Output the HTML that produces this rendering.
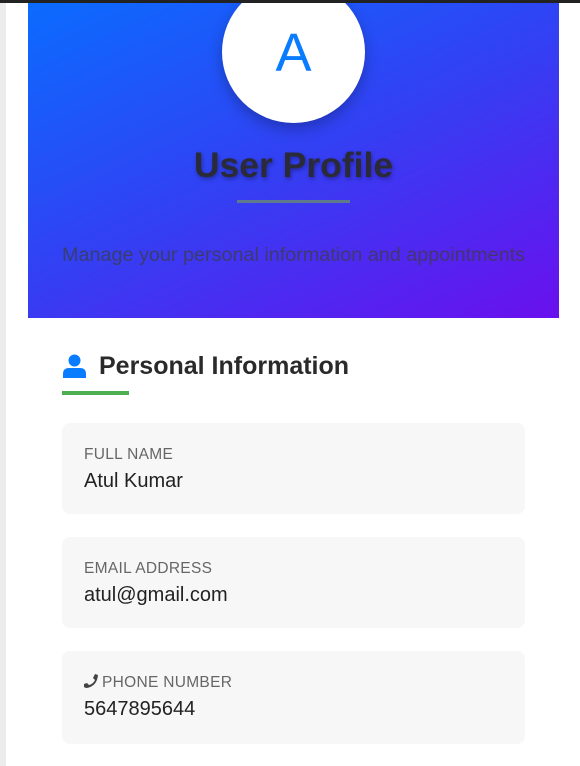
<!DOCTYPE html>
<html><head><meta charset="utf-8"><style>
*{box-sizing:border-box;margin:0;padding:0}
body{width:580px;height:766px;overflow:hidden;background:#fff;font-family:"Liberation Sans",Arial,sans-serif;position:relative}
.strip{position:absolute;left:0;top:0;width:6px;height:766px;background:#ececec}
.topbar{position:absolute;left:0;top:0;width:580px;height:3px;background:#222}
.hdr{position:absolute;left:28px;top:0;width:531px;height:318px;background:linear-gradient(155deg,#0a6cff 0%,#3340f3 50%,#6a10ee 100%);overflow:hidden}
.av{position:absolute;left:194px;top:-19px;width:143px;height:142px;border-radius:50%;background:#fff;box-shadow:0 6px 14px rgba(0,0,0,.25);text-align:center;font-size:54px;color:#0a7cff;padding-top:12px;line-height:120px}
.t{position:absolute;left:0;width:531px;top:145px;text-align:center;font-size:35.5px;font-weight:bold;color:#2a2a38;text-shadow:1px 2px 4px rgba(0,0,0,.35)}
.ln{position:absolute;left:209px;top:200px;width:113px;height:3px;background:#5e7a8c}
.s{position:absolute;left:0;width:531px;top:244px;text-align:center;font-size:19.8px;color:rgba(60,60,70,.75);white-space:nowrap}
.h{position:absolute;left:63px;top:352px;font-size:25px;font-weight:bold;color:#2a2a2a}
.h span{margin-left:36px}
.ul{position:absolute;left:62px;top:391px;width:67px;height:4px;background:#4caf50}
.card{position:absolute;left:62px;width:463px;height:91px;background:#f7f7f7;border-radius:8px;padding:23px 22px}
.lb{font-size:15.5px;color:#666;letter-spacing:.3px}
.v{font-size:20px;color:#222;margin-top:6px}
</style></head><body>
<div class="strip"></div>
<div class="hdr">
<div class="av">A</div>
<div class="t">User Profile</div>
<div class="ln"></div>
<div class="s">Manage your personal information and appointments</div>
</div>
<div class="topbar"></div>
<svg style="position:absolute;left:63px;top:354px" width="23" height="24" viewBox="0 0 23 24"><circle cx="11.5" cy="6.5" r="6" fill="#0a7cff"/><path d="M0 24 V20 Q0 14 6 14 H17 Q23 14 23 20 V24 Z" fill="#0a7cff"/></svg>
<div class="h"><span>Personal Information</span></div>
<div class="ul"></div>
<div class="card" style="top:423px"><div class="lb">FULL NAME</div><div class="v">Atul Kumar</div></div>
<div class="card" style="top:537px"><div class="lb">EMAIL ADDRESS</div><div class="v">atul@gmail.com</div></div>
<div class="card" style="top:651px;height:93px"><div class="lb"><svg width="15" height="14" viewBox="0 0 15 14" style="vertical-align:-1px;margin-right:3px"><path d="M14 1 L11 0 L9 4 L11 6 Q9 10 5 11 L3 9 L0 10 L0 13 Q1 14 3 14 Q13 12 14 1 Z" fill="#444"/></svg>PHONE NUMBER</div><div class="v">5647895644</div></div>
</body></html>
